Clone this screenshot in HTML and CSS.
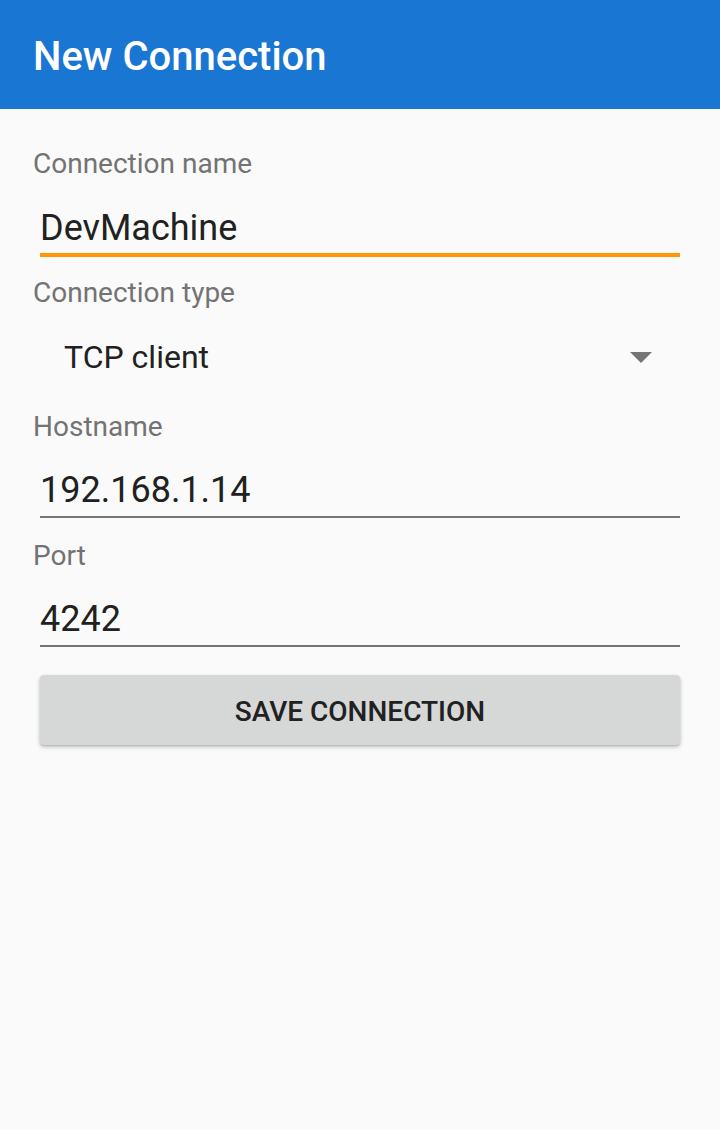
FILE: index.html
```html
<!DOCTYPE html>
<html lang="en">
<head>
<meta charset="utf-8">
<title>New Connection</title>
<link rel="stylesheet" href="styles.css">
</head>
<body>
<header class="appbar">
  <h1 class="appbar-title">New Connection</h1>
</header>
<main class="form">
  <section class="group group-name">
    <label class="label" for="name">Connection name</label>
    <input class="field field-focused" id="name" type="text" value="DevMachine">
  </section>
  <section class="group group-type">
    <div class="label">Connection type</div>
    <div class="spinner">
      <span class="spinner-text">TCP client</span>
      <svg class="spinner-arrow" width="22" height="11" viewBox="0 0 22 11" aria-hidden="true">
        <path d="M0 0 H22 L11 11 Z" fill="#757575"/>
      </svg>
    </div>
  </section>
  <section class="group group-host">
    <label class="label" for="host">Hostname</label>
    <input class="field" id="host" type="text" value="192.168.1.14">
  </section>
  <section class="group group-port">
    <label class="label" for="port">Port</label>
    <input class="field" id="port" type="text" value="4242">
  </section>
  <button class="save-btn" type="button">SAVE CONNECTION</button>
</main>
</body>
</html>
```

FILE: styles.css
```css
* {
  box-sizing: border-box;
}

html, body {
  margin: 0;
  padding: 0;
}

body {
  background: #fafafa;
  font-family: Roboto, "Noto Sans", "Liberation Sans", sans-serif;
  width: 720px;
  min-height: 1130px;
}

.appbar {
  background: #1976d2;
  height: 109px;
  padding: 37px 0 0 33px;
}

.appbar-title {
  margin: 0;
  color: #ffffff;
  font-size: 40px;
  font-weight: 500;
  line-height: 40px;
}

.form {
  display: flex;
  flex-direction: column;
  padding: 37px 40px 0 33px;
}

.group {
  display: flex;
  flex-direction: column;
}

.label {
  display: block;
  font-size: 28px;
  line-height: 35px;
  height: 35px;
  color: #737373;
}

.field {
  display: block;
  margin: 25px 0 0 7px;
  width: calc(100% - 7px);
  height: 50px;
  padding: 0 0 4px 0;
  border: none;
  border-bottom: 2px solid #757575;
  background: transparent;
  font-family: inherit;
  font-size: 36px;
  line-height: 44px;
  color: #212121;
  outline: none;
}

.field-focused {
  height: 51px;
  padding-bottom: 3px;
  border-bottom: 4px solid #ff9800;
}

.group-type {
  margin-top: 18px;
}

.spinner {
  display: flex;
  align-items: center;
  justify-content: space-between;
  margin: 25px 0 0 7px;
  height: 44px;
  padding: 1px 28px 0 24px;
}

.spinner-text {
  font-size: 32px;
  line-height: 43px;
  color: #212121;
}

.spinner-arrow {
  display: block;
  margin-top: -1px;
}

.group-host {
  margin-top: 30px;
}

.group-host .field {
  margin-top: 24px;
}

.group-port {
  margin-top: 20px;
}

.group-port .field {
  margin-top: 24px;
}

.save-btn {
  margin: 28px 0 0 7px;
  height: 70px;
  padding: 4px 0 0 0;
  border: none;
  border-radius: 4px;
  background: #d6d7d7;
  color: #212121;
  font-family: inherit;
  font-size: 28px;
  font-weight: 500;
  line-height: 32px;
  box-shadow: 0 2px 4px rgba(0, 0, 0, 0.22), 0 1px 2px rgba(0, 0, 0, 0.12);
}
```
